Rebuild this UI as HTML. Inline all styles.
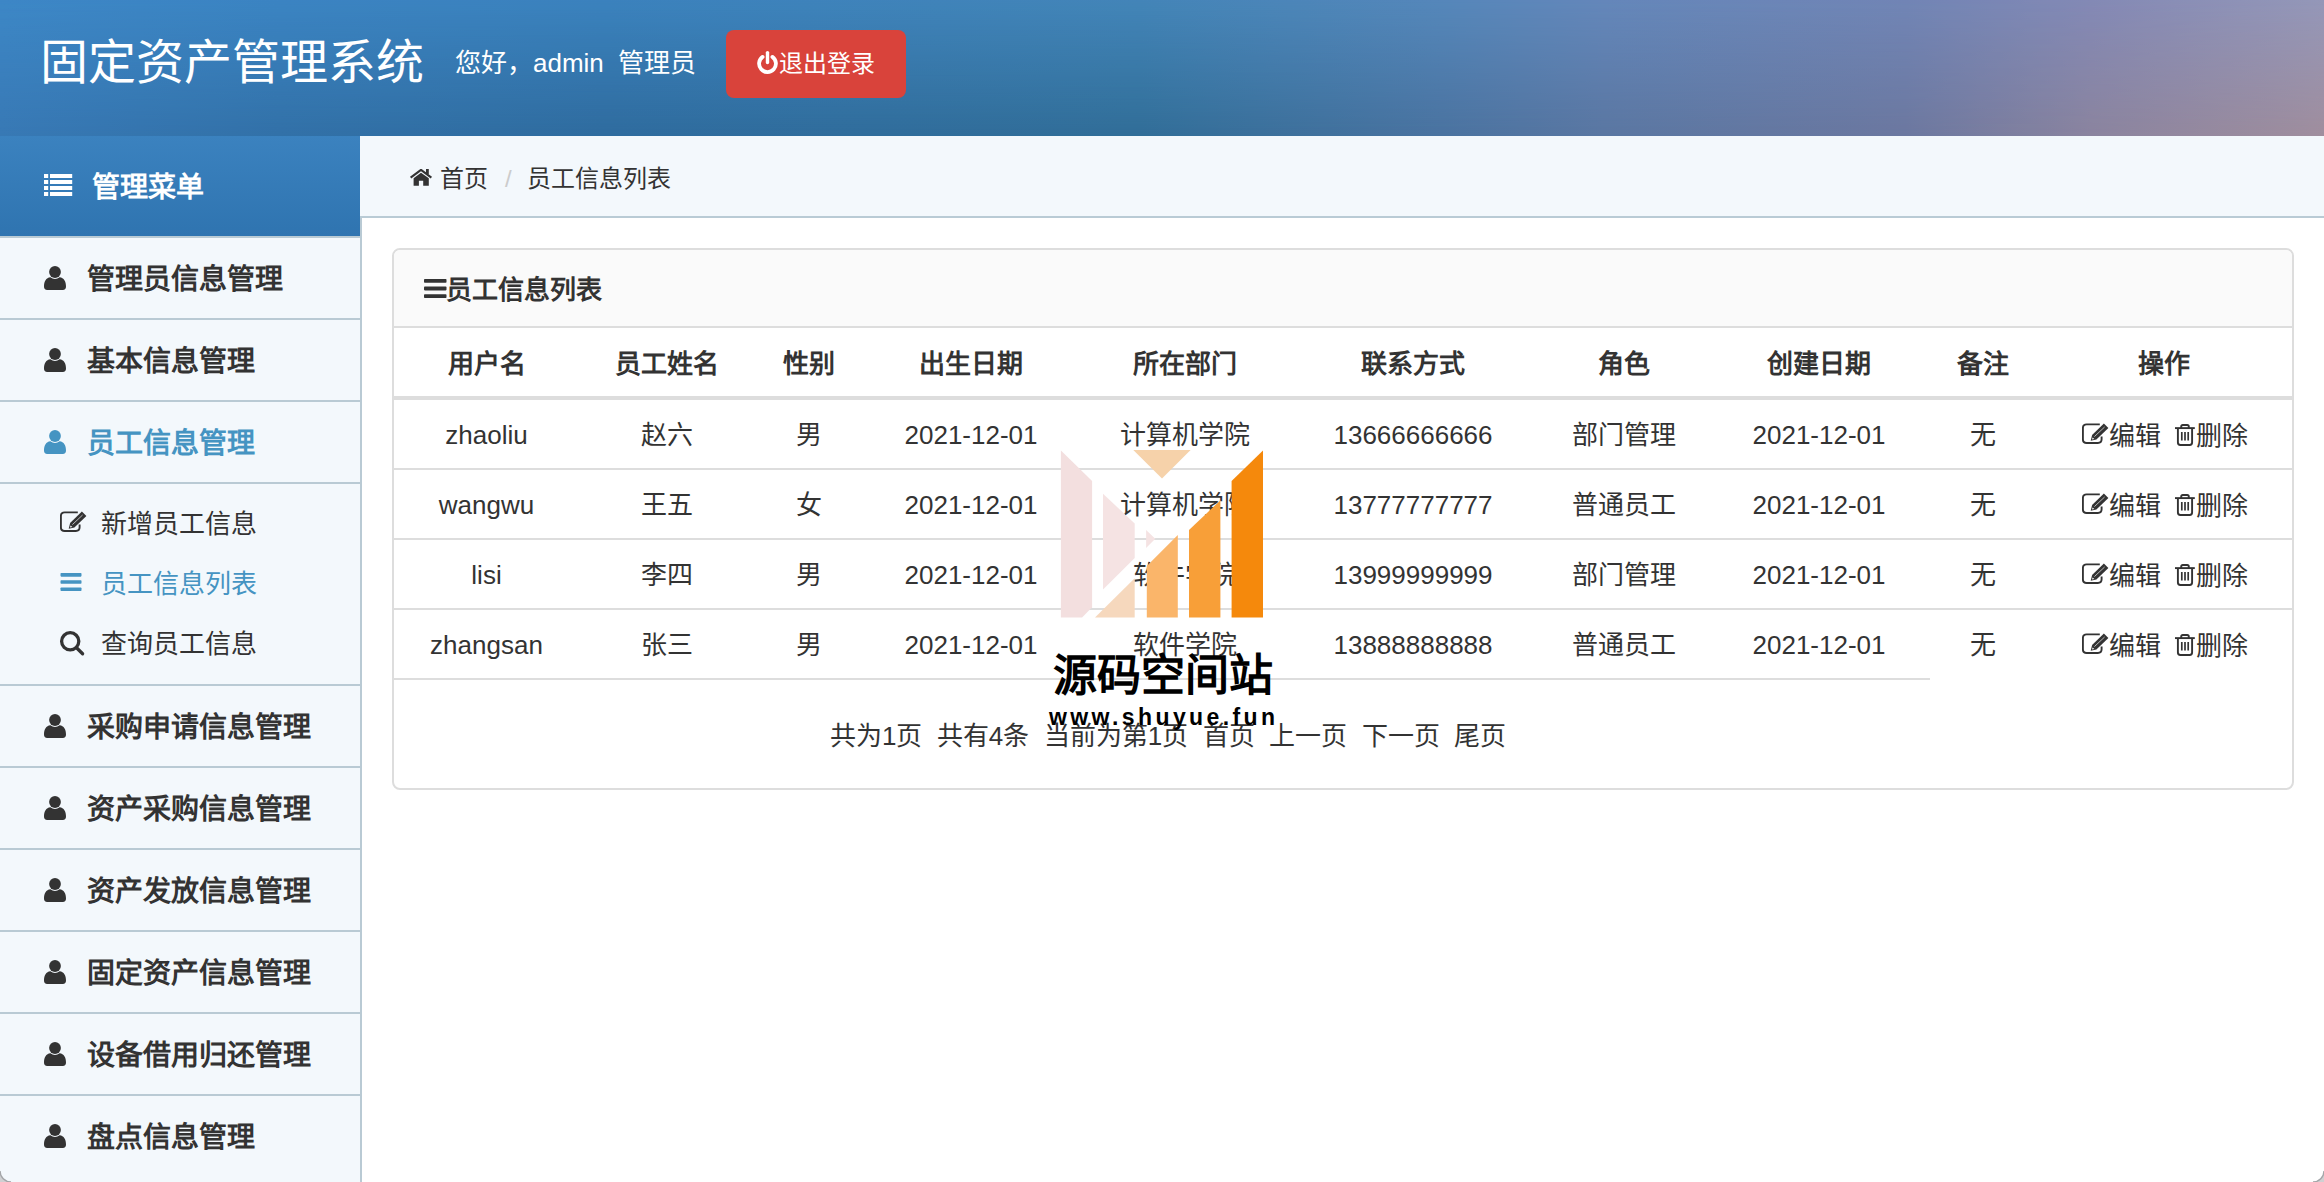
<!DOCTYPE html>
<html lang="zh-CN"><head><meta charset="utf-8">
<style>
*{box-sizing:border-box;margin:0;padding:0}
html,body{width:2324px;height:1182px;overflow:hidden;background:#fff;font-family:"Liberation Sans",sans-serif;color:#333}
.abs{position:absolute;white-space:nowrap}
#hdr{position:absolute;left:0;top:0;width:2324px;height:136px;background:linear-gradient(90deg,#3879b5 0%,#3271a8 12%,#2f6c9f 26%,#316e98 49%,#4a73a0 62%,#5a77a2 69%,#6c78a0 82%,#8b849f 90%,#a08e9e 100%)}
#hdrtop{position:absolute;left:0;top:0;width:2324px;height:136px;background:linear-gradient(90deg,#3d87c6 0%,#3b84c2 12%,#3b82bd 26%,#4385b8 49%,#5587ba 62%,#6487ba 69%,#7185b5 82%,#8389b5 90%,#9497b8 100%);-webkit-mask-image:linear-gradient(to bottom,#000 0%,rgba(0,0,0,0) 100%);mask-image:linear-gradient(to bottom,#000 0%,rgba(0,0,0,0) 100%)}
#side{position:absolute;left:0;top:136px;width:362px;height:1046px;background:#f3f8fc;border-right:2px solid #b9cad4}
#sidehd{position:absolute;left:0;top:0;width:360px;height:100px;background:linear-gradient(to bottom,#3b82bf,#2f74b0);color:#fff;font-size:28px;font-weight:bold}
.mi{position:absolute;left:0;width:360px;height:82px;border-bottom:2px solid #b9cad4;font-size:28px;font-weight:bold;color:#333;white-space:nowrap}
.mi .t{position:absolute;left:87px;top:23px;line-height:38px}
.si{position:absolute;left:0;width:360px;height:60px;font-size:26px;color:#333;white-space:nowrap}
.si .t{position:absolute;left:101px;top:13.5px;line-height:36px}
#crumb{position:absolute;left:360px;top:136px;width:1964px;height:82px;background:#f3f8fc;border-bottom:2px solid #b9cbd5;font-size:24px;color:#333}
#panel{position:absolute;left:392px;top:248px;width:1902px;height:542px;border:2px solid #ddd;border-radius:8px;background:#fff;overflow:hidden}
#phd{position:absolute;left:0;top:0;width:100%;height:78px;background:#fafafa;border-bottom:2px solid #ddd}
.c{position:absolute;width:400px;text-align:center;white-space:nowrap;font-size:26px;line-height:34px}
.th{font-weight:bold}
.hl{position:absolute;height:2px;background:#ddd}
</style></head><body>

<div id="hdr"><div id="hdrtop"></div>
<span class="abs" style="left:40px;top:33px;font-size:48px;line-height:60px;color:#fff">固定资产管理系统</span>
<span class="abs" style="left:455px;top:46px;font-size:26px;line-height:34px;color:#fff">您好，admin&nbsp; 管理员</span>
<div class="abs" style="left:726px;top:30px;width:180px;height:68px;background:#d9433b;border-radius:8px"></div>
<svg class="abs" style="left:755px;top:50px" width="26" height="26" viewBox="0 0 26 26" fill="none" stroke="#fff" stroke-width="3.8"><path d="M7.6,6.9 A8.4,8.4 0 1,0 17.4,6.9" stroke-linecap="round"/><path d="M12.5,2.6 V12.6" stroke-width="3.4" stroke-linecap="round"/></svg>
<span class="abs" style="left:779px;top:47px;font-size:24px;line-height:34px;color:#fff">退出登录</span>
</div>
<div id="side"><div id="sidehd">
<svg class="abs" style="left:44px;top:38px" width="29" height="23" viewBox="0 0 29 23" fill="#fff"><rect x="0" y="0" width="4.2" height="4"/><rect x="6" y="0" width="22.2" height="4"/><rect x="0" y="6" width="4.2" height="4"/><rect x="6" y="6" width="22.2" height="4"/><rect x="0" y="12" width="4.2" height="4"/><rect x="6" y="12" width="22.2" height="4"/><rect x="0" y="18" width="4.2" height="4"/><rect x="6" y="18" width="22.2" height="4"/></svg>
<span class="abs" style="left:92px;top:31.5px;line-height:40px">管理菜单</span></div>
<div class="mi" style="top:102px;color:#333"><svg class="abs" style="left:44px;top:28px" width="22" height="24" viewBox="0 0 22 24" fill="#333"><circle cx="11" cy="6" r="5.9"/><path d="M3.2,24 Q0,24 0,20.6 C0,15.6 2,11.7 6.43,11.3 A7,7 0 0,0 15.57,11.3 C20,11.7 22,15.6 22,20.6 Q22,24 18.8,24 Z"/></svg><span class="t">管理员信息管理</span></div>
<div class="mi" style="top:184px;color:#333"><svg class="abs" style="left:44px;top:28px" width="22" height="24" viewBox="0 0 22 24" fill="#333"><circle cx="11" cy="6" r="5.9"/><path d="M3.2,24 Q0,24 0,20.6 C0,15.6 2,11.7 6.43,11.3 A7,7 0 0,0 15.57,11.3 C20,11.7 22,15.6 22,20.6 Q22,24 18.8,24 Z"/></svg><span class="t">基本信息管理</span></div>
<div class="mi" style="top:266px;color:#4594c2"><svg class="abs" style="left:44px;top:28px" width="22" height="24" viewBox="0 0 22 24" fill="#4594c2"><circle cx="11" cy="6" r="5.9"/><path d="M3.2,24 Q0,24 0,20.6 C0,15.6 2,11.7 6.43,11.3 A7,7 0 0,0 15.57,11.3 C20,11.7 22,15.6 22,20.6 Q22,24 18.8,24 Z"/></svg><span class="t">员工信息管理</span></div>
<div class="si" style="top:356px;color:#333"><span class="t">新增员工信息</span></div>
<div class="si" style="top:416px;color:#4594c2"><span class="t">员工信息列表</span></div>
<div class="si" style="top:476px;color:#333"><span class="t">查询员工信息</span></div>
<svg class="abs" style="left:60px;top:375px" width="27" height="22" viewBox="0 0 27 22"><path d="M17.8,1.4 H4.6 Q0.9,1.4 0.9,5.1 V16.3 Q0.9,20 4.6,20 H15.9 Q19.6,20 19.6,16.3 V13.6" fill="none" stroke="#333" stroke-width="1.9"/><path d="M21.9,0.4 L26.4,4.9 L14.4,16.4 L8.7,17.8 L10.1,12.1 Z" fill="#333"/><path d="M12.4,13.6 L22.6,4.0" stroke="#ddd" stroke-width="0.8"/><path d="M10.6,14.4 L12.3,16.1 L10.0,16.6 Z" fill="#fff"/></svg>
<svg class="abs" style="left:60px;top:437.1px" width="22" height="19" viewBox="0 0 22 19.9" fill="#4594c2"><rect x="0" y="0.0" width="22" height="3.8" rx="0.8"/><rect x="0" y="7.55" width="22" height="3.8" rx="0.8"/><rect x="0" y="15.1" width="22" height="3.8" rx="0.8"/></svg>
<svg class="abs" style="left:59px;top:495px" width="27" height="27" viewBox="0 0 27 27" fill="none" stroke="#333" stroke-width="3.3"><circle cx="11.2" cy="10.3" r="8.6"/><path d="M17.5,16.8 L23.6,22.8" stroke-linecap="round"/></svg>
<div class="mi" style="top:550px"><svg class="abs" style="left:44px;top:28px" width="22" height="24" viewBox="0 0 22 24" fill="#333"><circle cx="11" cy="6" r="5.9"/><path d="M3.2,24 Q0,24 0,20.6 C0,15.6 2,11.7 6.43,11.3 A7,7 0 0,0 15.57,11.3 C20,11.7 22,15.6 22,20.6 Q22,24 18.8,24 Z"/></svg><span class="t">采购申请信息管理</span></div>
<div class="mi" style="top:632px"><svg class="abs" style="left:44px;top:28px" width="22" height="24" viewBox="0 0 22 24" fill="#333"><circle cx="11" cy="6" r="5.9"/><path d="M3.2,24 Q0,24 0,20.6 C0,15.6 2,11.7 6.43,11.3 A7,7 0 0,0 15.57,11.3 C20,11.7 22,15.6 22,20.6 Q22,24 18.8,24 Z"/></svg><span class="t">资产采购信息管理</span></div>
<div class="mi" style="top:714px"><svg class="abs" style="left:44px;top:28px" width="22" height="24" viewBox="0 0 22 24" fill="#333"><circle cx="11" cy="6" r="5.9"/><path d="M3.2,24 Q0,24 0,20.6 C0,15.6 2,11.7 6.43,11.3 A7,7 0 0,0 15.57,11.3 C20,11.7 22,15.6 22,20.6 Q22,24 18.8,24 Z"/></svg><span class="t">资产发放信息管理</span></div>
<div class="mi" style="top:796px"><svg class="abs" style="left:44px;top:28px" width="22" height="24" viewBox="0 0 22 24" fill="#333"><circle cx="11" cy="6" r="5.9"/><path d="M3.2,24 Q0,24 0,20.6 C0,15.6 2,11.7 6.43,11.3 A7,7 0 0,0 15.57,11.3 C20,11.7 22,15.6 22,20.6 Q22,24 18.8,24 Z"/></svg><span class="t">固定资产信息管理</span></div>
<div class="mi" style="top:878px"><svg class="abs" style="left:44px;top:28px" width="22" height="24" viewBox="0 0 22 24" fill="#333"><circle cx="11" cy="6" r="5.9"/><path d="M3.2,24 Q0,24 0,20.6 C0,15.6 2,11.7 6.43,11.3 A7,7 0 0,0 15.57,11.3 C20,11.7 22,15.6 22,20.6 Q22,24 18.8,24 Z"/></svg><span class="t">设备借用归还管理</span></div>
<div class="mi" style="top:960px;border-bottom:none"><svg class="abs" style="left:44px;top:28px" width="22" height="24" viewBox="0 0 22 24" fill="#333"><circle cx="11" cy="6" r="5.9"/><path d="M3.2,24 Q0,24 0,20.6 C0,15.6 2,11.7 6.43,11.3 A7,7 0 0,0 15.57,11.3 C20,11.7 22,15.6 22,20.6 Q22,24 18.8,24 Z"/></svg><span class="t">盘点信息管理</span></div>
<div class="abs" style="left:0;top:548px;width:360px;height:2px;background:#b9cad4"></div><div class="abs" style="left:0;top:100px;width:360px;height:2px;background:#b9cad4"></div>
</div>
<div id="crumb">
<svg class="abs" style="left:50px;top:33px" width="22" height="17" viewBox="0 0 22 17" fill="#333"><path d="M0.6,8.6 L11,0.9 L21.4,8.6" fill="none" stroke="#333" stroke-width="2.2"/><rect x="16" y="0" width="2.8" height="5"/><path d="M3.6,16.8 V9.2 L11,3.7 L18.8,9.2 V16.8 H13.2 V11.8 H8.9 V16.8 Z"/></svg>
<span class="abs" style="left:79.5px;top:25.5px;line-height:34px">首页</span><span class="abs" style="left:145px;top:25.5px;line-height:34px;color:#ccc">/</span><span class="abs" style="left:166.5px;top:25.5px;line-height:34px">员工信息列表</span></div>
<div id="panel"><div id="phd">
<svg class="abs" style="left:30px;top:29px" width="22.5" height="20" viewBox="0 0 22.5 20.0" fill="#333"><rect x="0" y="0.0" width="22.5" height="3.8" rx="0.8"/><rect x="0" y="7.6" width="22.5" height="3.8" rx="0.8"/><rect x="0" y="15.2" width="22.5" height="3.8" rx="0.8"/></svg>
<span class="abs" style="left:52px;top:23px;line-height:34px;font-size:26px;font-weight:bold">员工信息列表</span></div>
<div class="c th" style="left:-107.5px;top:97px">用户名</div>
<div class="c th" style="left:73px;top:97px">员工姓名</div>
<div class="c th" style="left:215px;top:97px">性别</div>
<div class="c th" style="left:377px;top:97px">出生日期</div>
<div class="c th" style="left:591px;top:97px">所在部门</div>
<div class="c th" style="left:819px;top:97px">联系方式</div>
<div class="c th" style="left:1030px;top:97px">角色</div>
<div class="c th" style="left:1225px;top:97px">创建日期</div>
<div class="c th" style="left:1389px;top:97px">备注</div>
<div class="c th" style="left:1570px;top:97px">操作</div>
<div class="hl" style="left:0;top:146px;width:100%;height:4px"></div>
<div class="c" style="left:-107.5px;top:168px">zhaoliu</div>
<div class="c" style="left:73px;top:168px">赵六</div>
<div class="c" style="left:215px;top:168px">男</div>
<div class="c" style="left:377px;top:168px">2021-12-01</div>
<div class="c" style="left:591px;top:168px">计算机学院</div>
<div class="c" style="left:819px;top:168px">13666666666</div>
<div class="c" style="left:1030px;top:168px">部门管理</div>
<div class="c" style="left:1225px;top:168px">2021-12-01</div>
<div class="c" style="left:1389px;top:168px">无</div>
<svg class="abs" style="left:1688px;top:173px" width="27" height="22" viewBox="0 0 27 22"><path d="M17.8,1.4 H4.6 Q0.9,1.4 0.9,5.1 V16.3 Q0.9,20 4.6,20 H15.9 Q19.6,20 19.6,16.3 V13.6" fill="none" stroke="#333" stroke-width="1.9"/><path d="M21.9,0.4 L26.4,4.9 L14.4,16.4 L8.7,17.8 L10.1,12.1 Z" fill="#333"/><path d="M12.4,13.6 L22.6,4.0" stroke="#ddd" stroke-width="0.8"/><path d="M10.6,14.4 L12.3,16.1 L10.0,16.6 Z" fill="#fff"/></svg>
<span class="abs" style="left:1715px;top:169px;font-size:26px;line-height:34px">编辑</span>
<svg class="abs" style="left:1781px;top:174px" width="20" height="22" viewBox="0 0 20 22" fill="none" stroke="#333" stroke-width="1.9"><path d="M0,4.1 H19.8"/><path d="M6.2,4 V2.6 Q6.2,1 7.8,1 H12.2 Q13.8,1 13.8,2.6 V4"/><path d="M2.9,4.5 V18.6 Q2.9,21 5.3,21 H14.7 Q17.1,21 17.1,18.6 V4.5"/><path d="M6.8,8 V16.5 M10,8 V16.5 M13.2,8 V16.5" stroke-width="1.7"/></svg>
<span class="abs" style="left:1802px;top:169px;font-size:26px;line-height:34px">删除</span>
<div class="hl" style="left:0;top:218px;width:100%"></div>
<div class="c" style="left:-107.5px;top:238px">wangwu</div>
<div class="c" style="left:73px;top:238px">王五</div>
<div class="c" style="left:215px;top:238px">女</div>
<div class="c" style="left:377px;top:238px">2021-12-01</div>
<div class="c" style="left:591px;top:238px">计算机学院</div>
<div class="c" style="left:819px;top:238px">13777777777</div>
<div class="c" style="left:1030px;top:238px">普通员工</div>
<div class="c" style="left:1225px;top:238px">2021-12-01</div>
<div class="c" style="left:1389px;top:238px">无</div>
<svg class="abs" style="left:1688px;top:243px" width="27" height="22" viewBox="0 0 27 22"><path d="M17.8,1.4 H4.6 Q0.9,1.4 0.9,5.1 V16.3 Q0.9,20 4.6,20 H15.9 Q19.6,20 19.6,16.3 V13.6" fill="none" stroke="#333" stroke-width="1.9"/><path d="M21.9,0.4 L26.4,4.9 L14.4,16.4 L8.7,17.8 L10.1,12.1 Z" fill="#333"/><path d="M12.4,13.6 L22.6,4.0" stroke="#ddd" stroke-width="0.8"/><path d="M10.6,14.4 L12.3,16.1 L10.0,16.6 Z" fill="#fff"/></svg>
<span class="abs" style="left:1715px;top:239px;font-size:26px;line-height:34px">编辑</span>
<svg class="abs" style="left:1781px;top:244px" width="20" height="22" viewBox="0 0 20 22" fill="none" stroke="#333" stroke-width="1.9"><path d="M0,4.1 H19.8"/><path d="M6.2,4 V2.6 Q6.2,1 7.8,1 H12.2 Q13.8,1 13.8,2.6 V4"/><path d="M2.9,4.5 V18.6 Q2.9,21 5.3,21 H14.7 Q17.1,21 17.1,18.6 V4.5"/><path d="M6.8,8 V16.5 M10,8 V16.5 M13.2,8 V16.5" stroke-width="1.7"/></svg>
<span class="abs" style="left:1802px;top:239px;font-size:26px;line-height:34px">删除</span>
<div class="hl" style="left:0;top:288px;width:100%"></div>
<div class="c" style="left:-107.5px;top:308px">lisi</div>
<div class="c" style="left:73px;top:308px">李四</div>
<div class="c" style="left:215px;top:308px">男</div>
<div class="c" style="left:377px;top:308px">2021-12-01</div>
<div class="c" style="left:591px;top:308px">软件学院</div>
<div class="c" style="left:819px;top:308px">13999999999</div>
<div class="c" style="left:1030px;top:308px">部门管理</div>
<div class="c" style="left:1225px;top:308px">2021-12-01</div>
<div class="c" style="left:1389px;top:308px">无</div>
<svg class="abs" style="left:1688px;top:313px" width="27" height="22" viewBox="0 0 27 22"><path d="M17.8,1.4 H4.6 Q0.9,1.4 0.9,5.1 V16.3 Q0.9,20 4.6,20 H15.9 Q19.6,20 19.6,16.3 V13.6" fill="none" stroke="#333" stroke-width="1.9"/><path d="M21.9,0.4 L26.4,4.9 L14.4,16.4 L8.7,17.8 L10.1,12.1 Z" fill="#333"/><path d="M12.4,13.6 L22.6,4.0" stroke="#ddd" stroke-width="0.8"/><path d="M10.6,14.4 L12.3,16.1 L10.0,16.6 Z" fill="#fff"/></svg>
<span class="abs" style="left:1715px;top:309px;font-size:26px;line-height:34px">编辑</span>
<svg class="abs" style="left:1781px;top:314px" width="20" height="22" viewBox="0 0 20 22" fill="none" stroke="#333" stroke-width="1.9"><path d="M0,4.1 H19.8"/><path d="M6.2,4 V2.6 Q6.2,1 7.8,1 H12.2 Q13.8,1 13.8,2.6 V4"/><path d="M2.9,4.5 V18.6 Q2.9,21 5.3,21 H14.7 Q17.1,21 17.1,18.6 V4.5"/><path d="M6.8,8 V16.5 M10,8 V16.5 M13.2,8 V16.5" stroke-width="1.7"/></svg>
<span class="abs" style="left:1802px;top:309px;font-size:26px;line-height:34px">删除</span>
<div class="hl" style="left:0;top:358px;width:100%"></div>
<div class="c" style="left:-107.5px;top:378px">zhangsan</div>
<div class="c" style="left:73px;top:378px">张三</div>
<div class="c" style="left:215px;top:378px">男</div>
<div class="c" style="left:377px;top:378px">2021-12-01</div>
<div class="c" style="left:591px;top:378px">软件学院</div>
<div class="c" style="left:819px;top:378px">13888888888</div>
<div class="c" style="left:1030px;top:378px">普通员工</div>
<div class="c" style="left:1225px;top:378px">2021-12-01</div>
<div class="c" style="left:1389px;top:378px">无</div>
<svg class="abs" style="left:1688px;top:383px" width="27" height="22" viewBox="0 0 27 22"><path d="M17.8,1.4 H4.6 Q0.9,1.4 0.9,5.1 V16.3 Q0.9,20 4.6,20 H15.9 Q19.6,20 19.6,16.3 V13.6" fill="none" stroke="#333" stroke-width="1.9"/><path d="M21.9,0.4 L26.4,4.9 L14.4,16.4 L8.7,17.8 L10.1,12.1 Z" fill="#333"/><path d="M12.4,13.6 L22.6,4.0" stroke="#ddd" stroke-width="0.8"/><path d="M10.6,14.4 L12.3,16.1 L10.0,16.6 Z" fill="#fff"/></svg>
<span class="abs" style="left:1715px;top:379px;font-size:26px;line-height:34px">编辑</span>
<svg class="abs" style="left:1781px;top:384px" width="20" height="22" viewBox="0 0 20 22" fill="none" stroke="#333" stroke-width="1.9"><path d="M0,4.1 H19.8"/><path d="M6.2,4 V2.6 Q6.2,1 7.8,1 H12.2 Q13.8,1 13.8,2.6 V4"/><path d="M2.9,4.5 V18.6 Q2.9,21 5.3,21 H14.7 Q17.1,21 17.1,18.6 V4.5"/><path d="M6.8,8 V16.5 M10,8 V16.5 M13.2,8 V16.5" stroke-width="1.7"/></svg>
<span class="abs" style="left:1802px;top:379px;font-size:26px;line-height:34px">删除</span>
<div class="hl" style="left:0;top:428px;width:1536px"></div>
<div class="c" style="left:274px;width:1000px;top:469px">共为1页&nbsp; 共有4条&nbsp; 当前为第1页&nbsp; 首页&nbsp; 上一页&nbsp; 下一页&nbsp; 尾页</div>
</div>
<svg class="abs" style="left:1050px;top:440px" width="230" height="190" viewBox="1050 440 230 190">
<polygon points="1060.9,450.4 1092.1,481 1092.1,607.2 1082.1,617.6 1060.9,617.6" fill="#f3dfdf"/>
<polygon points="1103,493.8 1134.7,523.6 1134.7,558.1 1103,589.5" fill="#f5e3e3"/>
<polygon points="1146.1,530 1155.3,538.8 1146.1,548" fill="#f5e3e3"/>
<polygon points="1095,617.6 1134.7,578.2 1134.7,617.6" fill="#f6d8bd"/>
<polygon points="1133.3,450 1190.6,450 1162,478.6" fill="#f6d2aa"/>
<polygon points="1146.8,566 1177.8,535 1177.8,617.6 1146.8,617.6" fill="#fab56a"/>
<polygon points="1189,530 1220.4,500.3 1220.4,617.6 1189,617.6" fill="#f89f38"/>
<polygon points="1231.6,481 1263,450.4 1263,617.6 1231.6,617.6" fill="#f5890c"/>
</svg>
<span class="abs" style="left:1053px;top:648px;font-size:44px;line-height:56px;font-weight:bold;color:#000">源码空间站</span>
<span class="abs" style="left:1049px;top:702px;font-size:23px;line-height:30px;font-weight:bold;color:#000;letter-spacing:3.4px">www.shuyue.fun</span>
<svg class="abs" style="left:0;top:1170px" width="12" height="12" viewBox="0 0 12 12"><path d="M0,0 V12 H12 A12,12 0 0,1 0,0 Z" fill="#cfd0d2"/><path d="M0,1 A11,11 0 0,0 11,12" fill="none" stroke="#a3a5a8" stroke-width="1.4"/></svg>
<svg class="abs" style="left:2312px;top:1170px" width="12" height="12" viewBox="0 0 12 12"><path d="M12,0 V12 H0 A12,12 0 0,0 12,0 Z" fill="#cfd0d2"/><path d="M12,1 A11,11 0 0,1 1,12" fill="none" stroke="#a3a5a8" stroke-width="1.4"/></svg>
</body></html>
